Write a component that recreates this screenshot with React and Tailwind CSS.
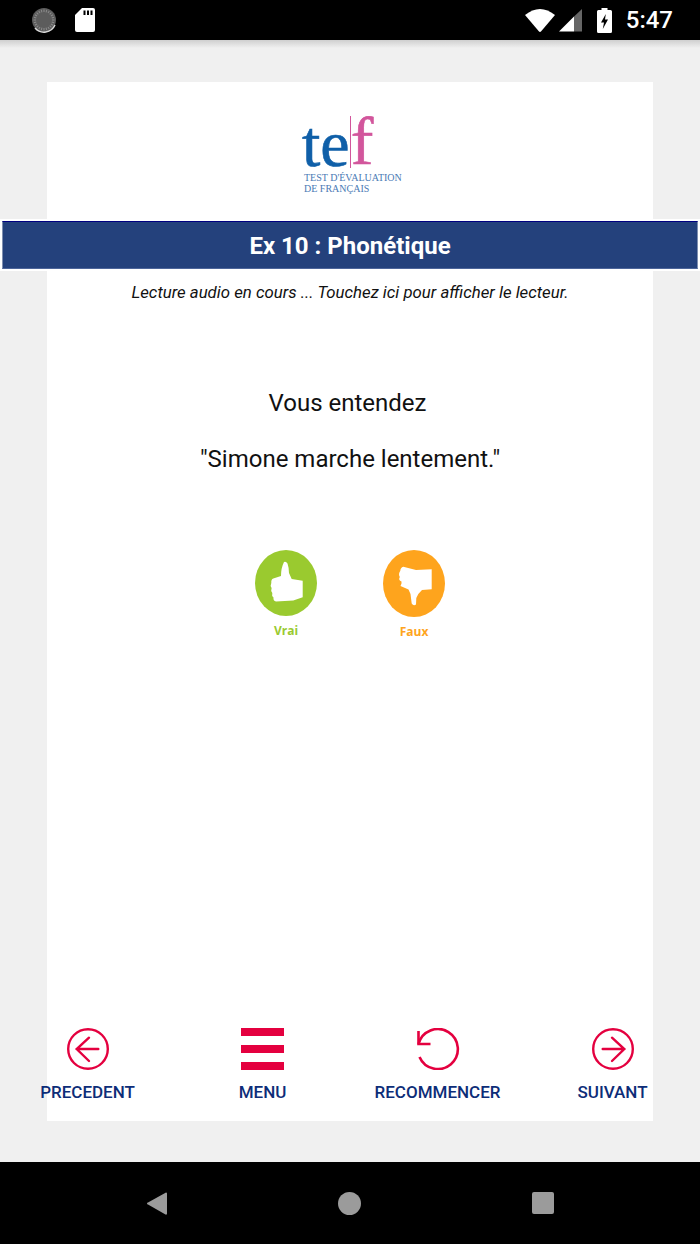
const RED = '#e4003f'

function Spinner() {
	const ticks = Array.from({ length: 24 }, (_, i) => i * 15)
	return (
		<svg width="26" height="26" viewBox="0 0 26 26">
			<circle cx="13" cy="13" r="12" fill="#5c5c5c" />
			<path d="M4 21 A12 12 0 0 0 24 18" fill="none" stroke="#d8d8d8" strokeWidth="1.5" />
			{ticks.map((deg) => (
				<line key={deg} x1="13" y1="2.5" x2="13" y2="5" stroke="#8c8c8c" strokeWidth="1" transform={`rotate(${deg} 13 13)`} />
			))}
		</svg>
	)
}

function SdCard() {
	return (
		<svg width="20" height="24" viewBox="0 0 20 24">
			<path d="M7 0 H18 a2 2 0 0 1 2 2 V22 a2 2 0 0 1 -2 2 H2 a2 2 0 0 1 -2 -2 V7 Z" fill="#fff" />
			<rect x="8.5" y="2.5" width="2" height="4.5" fill="#000" />
			<rect x="12" y="2.5" width="2" height="4.5" fill="#000" />
			<rect x="15.5" y="2.5" width="2" height="4.5" fill="#000" />
		</svg>
	)
}

function Wifi() {
	return (
		<svg width="30" height="24" viewBox="0 0 30 24">
			<path d="M0 7 Q15 -5 30 7 L16.2 23.2 a1.6 1.6 0 0 1 -2.4 0 Z" fill="#fff" />
		</svg>
	)
}

function Signal() {
	return (
		<svg width="23" height="23" viewBox="0 0 23 23">
			<path d="M0 22.5 L15 7.5 V22.5 Z" fill="#fff" />
			<path d="M15 7.5 L23 0 V22.5 H15 Z" fill="#666" />
		</svg>
	)
}

function Battery() {
	return (
		<svg width="15" height="25" viewBox="0 0 15 25">
			<path d="M4.5 0 H10.5 V2 H13.5 a1.5 1.5 0 0 1 1.5 1.5 V23.5 a1.5 1.5 0 0 1 -1.5 1.5 H1.5 a1.5 1.5 0 0 1 -1.5 -1.5 V3.5 a1.5 1.5 0 0 1 1.5 -1.5 H4.5 Z" fill="#fff" />
			<path d="M8.8 6 L4 14.5 H7 L5.8 21 L11 11.5 H8 Z" fill="#000" />
		</svg>
	)
}

function ThumbUp() {
	return (
		<svg width="62" height="66" viewBox="0 0 62 66">
			<ellipse cx="31" cy="33" rx="31" ry="33" fill="#9aca2f" />
			<path d="M29 12 Q31 11 32.5 13.5 Q34 18 34 23 L36.7 29 L47.7 30.7 V47.3 L38.3 50.5 L21 51.5 Q18 51 18.5 47.5 Q16.5 46 17.3 43 Q15.5 41 16.6 38 Q15 35.5 16.3 33 Q16 29.5 18.3 28.6 L26 26 Q26 18 29 12 Z" fill="#fff" />
		</svg>
	)
}

function ThumbDown() {
	return (
		<svg width="62" height="67" viewBox="0 0 62 67">
			<ellipse cx="31" cy="33.5" rx="31" ry="33.5" fill="#fea41d" />
			<path d="M20.3 16.7 L33 20 L48.7 19.3 V39.3 L39 40 Q34.5 44 33.3 48 L33 54.5 Q30.5 56.5 28.7 53.5 L27.5 44 L25.5 39.5 L17.5 36 Q19 33 18.5 31.5 Q15 30 16.8 27 Q15 24 17.3 20.7 Q17.5 17.5 20.3 16.7 Z" fill="#fff" />
		</svg>
	)
}

function ArrowCircle({ flip }) {
	return (
		<svg width="42" height="42" viewBox="0 0 42 42" fill="none" stroke={RED} strokeWidth="2.4" className={flip ? '-scale-x-100' : ''}>
			<circle cx="21" cy="21" r="19.8" />
			<path d="M31.3 21 H9.7 M22 9.7 L9.7 21 L22 33" strokeLinecap="round" />
		</svg>
	)
}

function MenuIcon() {
	return (
		<div className="flex flex-col gap-[9.5px] h-[42px] w-[43px]">
			<div className="h-2 bg-[#e4003f]" />
			<div className="h-2 bg-[#e4003f]" />
			<div className="h-2 bg-[#e4003f]" />
		</div>
	)
}

function RestartIcon() {
	return (
		<svg width="44" height="42" viewBox="0 0 44 42" fill="none" stroke={RED} strokeWidth="2.6">
			<path d="M2.5 16 A20 20 0 1 1 3.5 29" />
			<path d="M2.5 3 V16 H14.5" />
		</svg>
	)
}

const navItems = [
	{ label: 'PRECEDENT', icon: <ArrowCircle /> },
	{ label: 'MENU', icon: <MenuIcon /> },
	{ label: 'RECOMMENCER', icon: <RestartIcon /> },
	{ label: 'SUIVANT', icon: <ArrowCircle flip /> },
]

export default function App() {
	return (
		<div className="flex flex-col h-[1244px] w-[700px] overflow-hidden bg-[#f0f0f0] font-['Roboto',sans-serif]">

			{/* status bar */}
			<div className="flex items-center justify-between h-10 shrink-0 bg-black pl-[31px] pr-[27px]">
				<div className="flex items-center gap-[18px]">
					<Spinner />
					<SdCard />
				</div>
				<div className="flex items-center">
					<Wifi />
					<div className="ml-[4px]"><Signal /></div>
					<div className="ml-[15px]"><Battery /></div>
					<span className="ml-[14px] text-white text-[24px] leading-none font-medium">5:47</span>
				</div>
			</div>
			<div className="h-2 shrink-0 bg-gradient-to-b from-[#cfcfcf] to-[#f0f0f0]" />

			<main className="flex flex-col flex-1 min-h-0 px-[47px] pt-[34px] pb-[41px]">
				<div className="flex flex-col flex-1 bg-white">

					{/* logo */}
					<div className="flex flex-col h-[137px] w-[98px] ml-[255px] pt-[32px] font-['Liberation_Serif',serif]">
						<div className="flex h-[60px] text-[66px] leading-[60px]">
							<span className="text-[#0f5fa8] [-webkit-text-stroke:0.6px_#0f5fa8]">te</span>
							<span className="text-[#d2569c] [-webkit-text-stroke:0.6px_#d2569c] border-l border-[#d2569c] h-[52px] text-[68px] leading-[51px] mt-[2px]">f</span>
						</div>
						<div className="text-[#4a7ab5] text-[10px] leading-[11px] whitespace-nowrap ml-[2px] -mt-[2px]">
							<div>TEST D'ÉVALUATION</div>
							<div>DE FRANÇAIS</div>
						</div>
					</div>

					{/* banner */}
					<div className="-mx-[47px] bg-white p-[2px]">
						<div className="flex items-center justify-center h-12 pt-[2px] bg-[#24417c] border-t border-t-[#000080] border-x border-x-[#7f8fb0] border-b border-b-[#4d659a]">
							<span className="text-white text-[24px] font-bold">Ex 10 : Phonétique</span>
						</div>
					</div>

					<p className="mt-[11px] text-center text-[16.8px] leading-5 italic text-[#111]">
						Lecture audio en cours ... Touchez ici pour afficher le lecteur.
					</p>

					<p className="mt-[85px] pr-[5px] text-center text-[24px] leading-8 text-[#111]">Vous entendez</p>
					<p className="mt-6 text-center text-[24px] leading-8 text-[#111]">"Simone marche lentement."</p>

					{/* true / false */}
					<div className="flex justify-center gap-[66px] mt-[75px]">
						<div className="flex flex-col items-center w-[62px]">
							<ThumbUp />
							<span className="mt-[7px] text-[12px] leading-4 font-bold text-[#9aca2f] font-['Open_Sans',sans-serif]">Vrai</span>
						</div>
						<div className="flex flex-col items-center w-[62px]">
							<ThumbDown />
							<span className="mt-[7px] text-[12px] leading-4 font-bold text-[#fea41d] font-['Open_Sans',sans-serif]">Faux</span>
						</div>
					</div>

					{/* bottom nav */}
					<div className="grid grid-cols-4 -mx-[47px] mt-auto pb-[19px]">
						{navItems.map((item) => (
							<div key={item.label} className="flex flex-col items-center gap-3">
								<div className="flex justify-center h-[42px]">{item.icon}</div>
								<span className="text-[17px] leading-5 font-medium text-[#0d2d78]">{item.label}</span>
							</div>
						))}
					</div>
				</div>
			</main>

			{/* android nav bar */}
			<div className="flex items-center justify-center gap-[171px] h-[82px] shrink-0 bg-black">
				<svg width="20" height="23" viewBox="0 0 20 23">
					<path d="M19 0.5 a1 1 0 0 1 1 1 V21.5 a1 1 0 0 1 -1.5 1 L1 12.5 a1 1 0 0 1 0 -2 Z" fill="#9b9b9b" />
				</svg>
				<div className="w-[23px] h-[23px] rounded-full bg-[#9b9b9b]" />
				<div className="w-[22px] h-[22px] rounded-[2px] bg-[#9b9b9b]" />
			</div>
		</div>
	)
}
